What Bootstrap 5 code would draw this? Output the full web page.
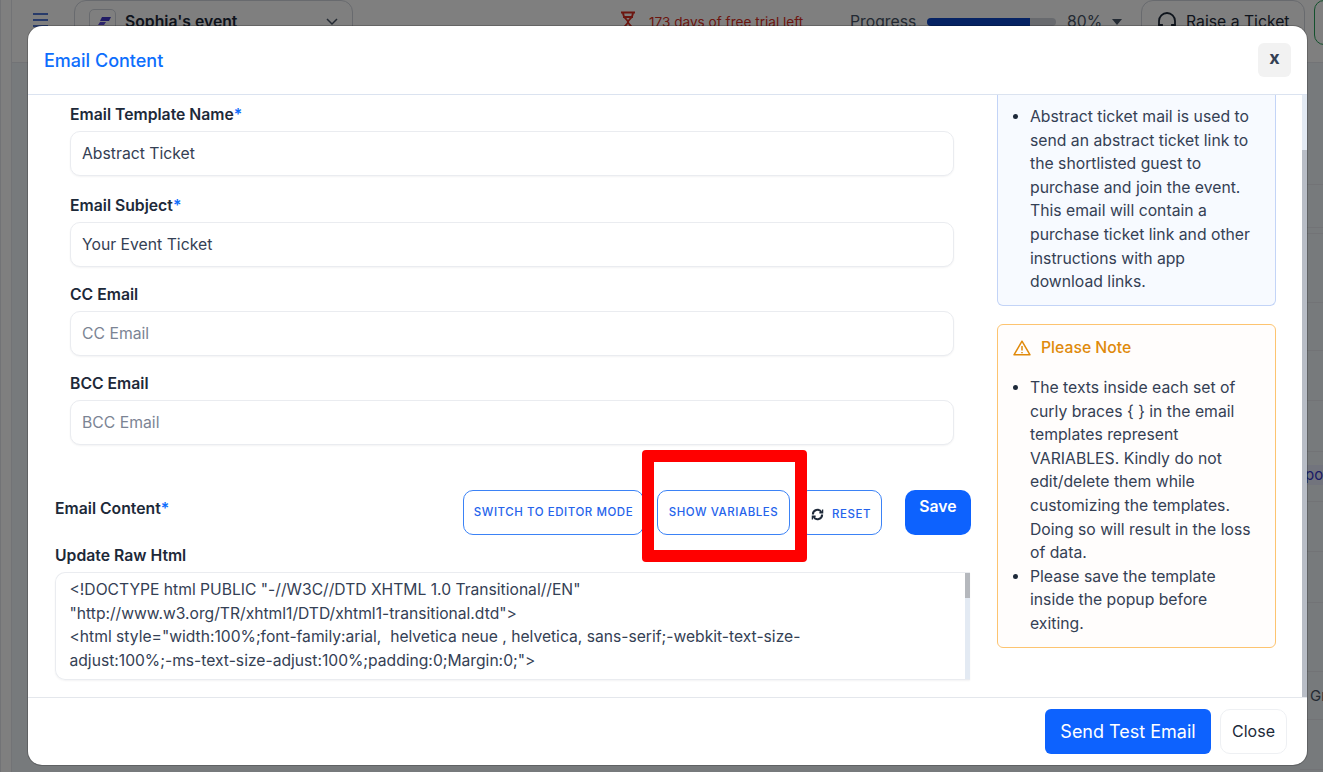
<!DOCTYPE html>
<html lang="en"><head><meta charset="utf-8">
<link href="https://cdn.jsdelivr.net/npm/bootstrap@5.3.0/dist/css/bootstrap.min.css" rel="stylesheet">
<style>
html,body{height:772px;overflow:hidden;font-family:Inter,"Liberation Sans",sans-serif;color:#1d2939;background:#fff}
.stage{height:772px;overflow:hidden;background:#eff4f8}
.appbar{height:63px;background:#fff;border-bottom:1px solid #e4e7ec;padding-left:33px;font-size:15.75px;overflow:hidden}
.barrow{height:44px;width:1400px}
.burger{width:15px;height:20px;margin-top:-6px;flex:none}
.evpick{width:279px;height:45px;border:1px solid #d0d5dd;border-radius:12px;margin-left:26px;padding:0 14px;font-weight:600;flex:none}
.logo-tile{width:27px;height:27px;border:1px solid #d0d5dd;border-radius:5px;margin-right:9px;flex:none}
.hg{margin-left:267px;flex:none}
.trial{color:#d92d20;font-size:13.6px;margin-left:13px;width:154px;flex:none;white-space:nowrap}
.prog-label{color:#475467;margin-left:47px;width:66px;flex:none}
.pbar{width:129px;height:8px;border-radius:4px;background:#d0d5dd;margin-left:11px;overflow:hidden;flex:none}
.pfill{height:8px;background:#0d47c9}
.pct{color:#475467;margin-left:11px;width:33px;flex:none}
.caret{flex:none;margin-left:12px}
.ticket{height:45px;border:1px solid #d0d5dd;border-radius:12px;margin-left:19px;width:164px;padding-left:14px;flex:none}
.greenbox{width:40px;height:45px;border:1px solid #27a35a;border-radius:10px;margin-left:9px;flex:none}
.pagerest{height:709px}
.siderail{width:12px;background:#fff;border-left:1px solid #e4e7ec;border-right:1px solid #e4e7ec;margin-top:-63px;height:772px;flex:none}
.rowsbox{flex:1;margin-left:1288px;font-size:15px}
.rw{border-bottom:1px solid #e4e7ec;white-space:nowrap;overflow:hidden}
.h1r{height:122px}.h2r{height:43px}.h3r{height:6px}.h4r{height:69px}.h5r{height:48px}.h6r{height:50px}.h7r{height:51px}.h9r{height:69px}
.rowhi{background:#e5e8fb;margin-top:13px;height:20px;color:#3538cd;line-height:20px;padding-left:5px}
.rowgro{color:#475467;line-height:1;padding:16px 0 0 10px}
.shade{position:absolute;inset:0;background:rgba(0,0,0,.5)}
.sheet{position:absolute;left:28px;top:26px;width:1279px;height:739px;background:#fff;border-radius:14px;overflow:hidden;display:flex;flex-direction:column;box-shadow:0 0 0 1px rgba(0,0,0,.2)}
.sheet-head{height:69px;flex:none;border-bottom:1px solid #dbe3f0;padding:2px 16px 0 16px}
.sheet-title{font-size:18px;font-weight:500;color:#0d6efd;margin:0}
.xbtn{width:33px;height:34px;background:#f2f2f2;border:0;border-radius:6px;font-size:18px;font-weight:700;color:#344054;line-height:1;padding:0 0 4px;margin-top:-2px}
.sheet-body{flex:1;min-height:0;overflow:hidden;position:relative;padding-right:5px}
.rail{position:absolute;right:0;top:0;bottom:0;width:5px;background:#e3eaf3}
.rail-thumb{position:absolute;right:0;top:55px;bottom:0;width:5px;background:#b8bdc6}
.leftcol{width:942px;margin-left:27px;flex:none;padding-top:10px}
.fld{margin-left:15px;width:884px}
.lbl{font-size:15.75px;font-weight:600;color:#1d2939;line-height:20px;margin-bottom:6px}
.lbl i{font-style:normal;color:#0d6efd}
.inp{height:45px;border:1px solid #eaecf0;border-radius:10px;font-size:15.75px;padding:0 11px;box-shadow:0 1px 2px rgba(16,24,40,.05);color:#344054;width:100%}
.inp::placeholder{color:#7b8494;opacity:1}
.gapa{height:20px}.gapb{height:18px}
.toolrow{margin-top:45px;height:45px}
.tool{height:45px;border:1px solid #3b82f6;border-radius:10px;background:#fff;color:#2563eb;font-size:11.5px;font-weight:500;letter-spacing:.55px;padding:0;text-transform:uppercase;flex:none}
.t1{width:181px}.t2{width:133px;margin-left:13px}.t3{width:84px;margin-left:8px;padding:4px 0 0 2px}
.tsave{width:66px;height:45px;background:#0d62fe;color:#fff;border:0;border-radius:10px;font-weight:600;font-size:15.75px;margin:0 26px 0 23px;padding:0 0 11px;flex:none}
.rawlbl{margin-top:11px;margin-bottom:6px}
.rawwrap{height:108px;width:915px;border:1px solid #eaecf0;border-radius:10px 0 0 10px;position:relative;overflow:hidden;padding:5px 0 0 13.5px;font-size:15.65px;line-height:23.7px;color:#344054;box-shadow:0 1px 2px rgba(16,24,40,.05);border-right:0;white-space:nowrap}
.sbar{position:absolute;right:0;top:0;bottom:0;width:5px;background:#e3eaf3}
.sbar b{position:absolute;left:0;top:0;width:5px;height:25px;background:#b5b8bd}
.rightcol{width:279px;flex:none}
.infobox{background:#f7faff;border:1px solid #c3d4f7;border-top:0;border-radius:0 0 6px 6px;height:211px;padding:10px 18px 0 0;font-size:15.75px;line-height:23.6px;color:#344054}
.infobox ul,.notebox ul{margin:0;padding-left:32px}
.infobox li::marker,.notebox li::marker{color:#1d2939}
.notebox{background:#fffdfc;border:1px solid #fdc470;border-radius:6px;margin-top:18px;height:324px;padding:12px 18px 0 0;font-size:15.75px;line-height:23.6px;color:#344054}
.notehd{color:#e08a0b;font-weight:500;padding-left:15px;gap:10px;margin-bottom:17px;height:22px}
.sheet-foot{height:68px;flex:none;border-top:1px solid #e4e7ec;padding:11px 20px 0 0;gap:9px}
.sendbtn{width:166px;height:45px;background:#0d62fe;color:#fff;border:0;border-radius:6px;font-size:18px;padding:0}
.closebtn{width:67px;height:45px;background:#fff;border:1px solid #eef0f3;border-radius:10px;font-size:16px;color:#1d2939;padding:0 0 2px}
.redbox{position:absolute;left:642px;top:450px;width:165px;height:112px;border:12px solid #f00;border-radius:4px;pointer-events:none}
</style></head>
<body>
<div class="stage position-relative">
  <div class="appbar">
    <div class="barrow d-flex align-items-center">
      <svg class="burger" viewBox="0 0 15 20" fill="none" stroke="#1849c6" stroke-width="1.6"><path d="M0 5h15M0 11h15M0 17h15"/></svg>
      <div class="evpick d-flex align-items-center">
        <div class="logo-tile d-flex align-items-center justify-content-center">
          <svg width="18" height="14" viewBox="0 0 18 14"><path d="M8 2h9l-2 4H6z" fill="#4338ca"/><path d="M6 7h6l-2 3H4z" fill="#5b48d8"/><path d="M3 11h4l-1 2H2z" fill="#8f7ff0"/></svg>
        </div>
        <span class="flex-grow-1">Sophia's event</span>
        <svg width="12" height="8" viewBox="0 0 12 8" fill="none" stroke="#475467" stroke-width="1.500"><path d="M1 1l5 5 5-5"/></svg>
      </div>
      <svg class="hg" width="16" height="22" viewBox="0 0 16 22" fill="none" stroke="#d92d20" stroke-width="1.8"><path d="M1 1.500h14M3 1.500c0 6 5 7 5 9.500s-5 3.500-5 9.500M13 1.500c0 6-5 7-5 9.500s5 3.500 5 9.500M3 6h10"/></svg>
      <span class="trial">173 days of free trial left</span>
      <span class="prog-label">Progress</span>
      <div class="pbar"><div class="pfill" style="width:80%"></div></div>
      <span class="pct">80%</span>
      <svg class="caret" width="10" height="6" viewBox="0 0 10 6"><path d="M0 0h10L5 6z" fill="#475467"/></svg>
      <div class="ticket d-flex align-items-center">
        <svg width="22" height="22" viewBox="0 0 22 22" fill="none" stroke="#1d2939" stroke-width="1.8" class="me-2"><path d="M3 14v-4a8 8 0 0 1 16 0v4"/><path d="M3 14h3v5H3zM16 14h3v5h-3z"/></svg>
        <span>Raise a Ticket</span>
      </div>
      <div class="greenbox"></div>
    </div>
  </div>
  <div class="pagerest d-flex">
    <div class="siderail"></div>
    <div class="rowsbox">
      <div class="rw h1r"></div><div class="rw h2r"></div><div class="rw h3r"></div><div class="rw h4r"></div><div class="rw h5r"></div><div class="rw h6r"></div><div class="rw h7r"></div>
      <div class="rw h6r"><div class="rowhi">port</div></div>
      <div class="rw h6r"></div><div class="rw h7r"></div><div class="rw h9r"></div>
      <div class="rw h5r rowgro">Groups</div>
      <div class="rw h6r"></div>
    </div>
  </div>
  <div class="shade"></div>

  <div class="sheet">
    <div class="sheet-head d-flex align-items-center justify-content-between">
      <h5 class="sheet-title">Email Content</h5>
      <button class="xbtn" type="button">x</button>
    </div>
    <div class="sheet-body d-flex">
      <div class="leftcol">
        <div class="fld">
          <div class="lbl">Email Template Name<i>*</i></div>
          <input class="inp d-block" value="Abstract Ticket">
          <div class="gapa"></div>
          <div class="lbl">Email Subject<i>*</i></div>
          <input class="inp d-block" value="Your Event Ticket">
          <div class="gapb"></div>
          <div class="lbl">CC Email</div>
          <input class="inp d-block" placeholder="CC Email">
          <div class="gapb"></div>
          <div class="lbl">BCC Email</div>
          <input class="inp d-block" placeholder="BCC Email">
        </div>
        <div class="toolrow d-flex align-items-start">
          <div class="lbl mb-0 flex-grow-1" style="line-height:37px">Email Content<i>*</i></div>
          <button class="tool t1" type="button">Switch to editor mode</button>
          <button class="tool t2" type="button">Show Variables</button>
          <button class="tool t3 d-flex align-items-center justify-content-center gap-2" type="button">
            <svg width="13" height="13" viewBox="0 0 14 14" fill="none" stroke="#1d2939" stroke-width="2.200"><path d="M12 7a5 5 0 0 1-9.200 2.700M2 7a5 5 0 0 1 9.200-2.700"/><path d="M12.500 1.500v3.600H9M1.500 12.500V8.900H5" stroke-width="1.400"/></svg>Reset</button>
          <button class="tsave" type="button">Save</button>
        </div>
        <div class="lbl rawlbl">Update Raw Html</div>
        <div class="rawwrap">&lt;!DOCTYPE html PUBLIC "-//W3C//DTD XHTML 1.0 Transitional//EN"<br>"http://www.w3.org/TR/xhtml1/DTD/xhtml1-transitional.dtd"&gt;<br>&lt;html style="width:100%;font-family:arial,&nbsp; helvetica neue , helvetica, sans-serif;-webkit-text-size-<br>adjust:100%;-ms-text-size-adjust:100%;padding:0;Margin:0;"&gt;
          <div class="sbar"><b></b></div>
        </div>
      </div>
      <div class="rightcol">
        <div class="infobox"><ul><li>Abstract ticket mail is used to send an abstract ticket link to the shortlisted guest to purchase and join the event. This email will contain a purchase ticket link and other instructions with app download links.</li></ul></div>
        <div class="notebox">
          <div class="notehd d-flex align-items-center">
            <svg width="18" height="16" viewBox="0 0 18 16" fill="none" stroke="#e08a0b" stroke-width="1.500" stroke-linejoin="round"><path d="M9 1.200 1 14.800h16z"/><path d="M9 6v4.500M9 12v1.200"/></svg>
            Please Note
          </div>
          <ul>
            <li>The texts inside each set of curly braces { } in the email templates represent VARIABLES. Kindly do not edit/delete them while customizing the templates. Doing so will result in the loss of data.</li>
            <li>Please save the template inside the popup before exiting.</li>
          </ul>
        </div>
      </div>
      <div class="rail"><div class="rail-thumb"></div></div>
    </div>
    <div class="sheet-foot d-flex justify-content-end align-items-start">
      <button class="sendbtn" type="button">Send Test Email</button>
      <button class="closebtn" type="button">Close</button>
    </div>
  </div>
  <div class="redbox"></div>
</div>
<script src="https://cdn.jsdelivr.net/npm/bootstrap@5.3.0/dist/js/bootstrap.bundle.min.js"></script>
</body></html>
